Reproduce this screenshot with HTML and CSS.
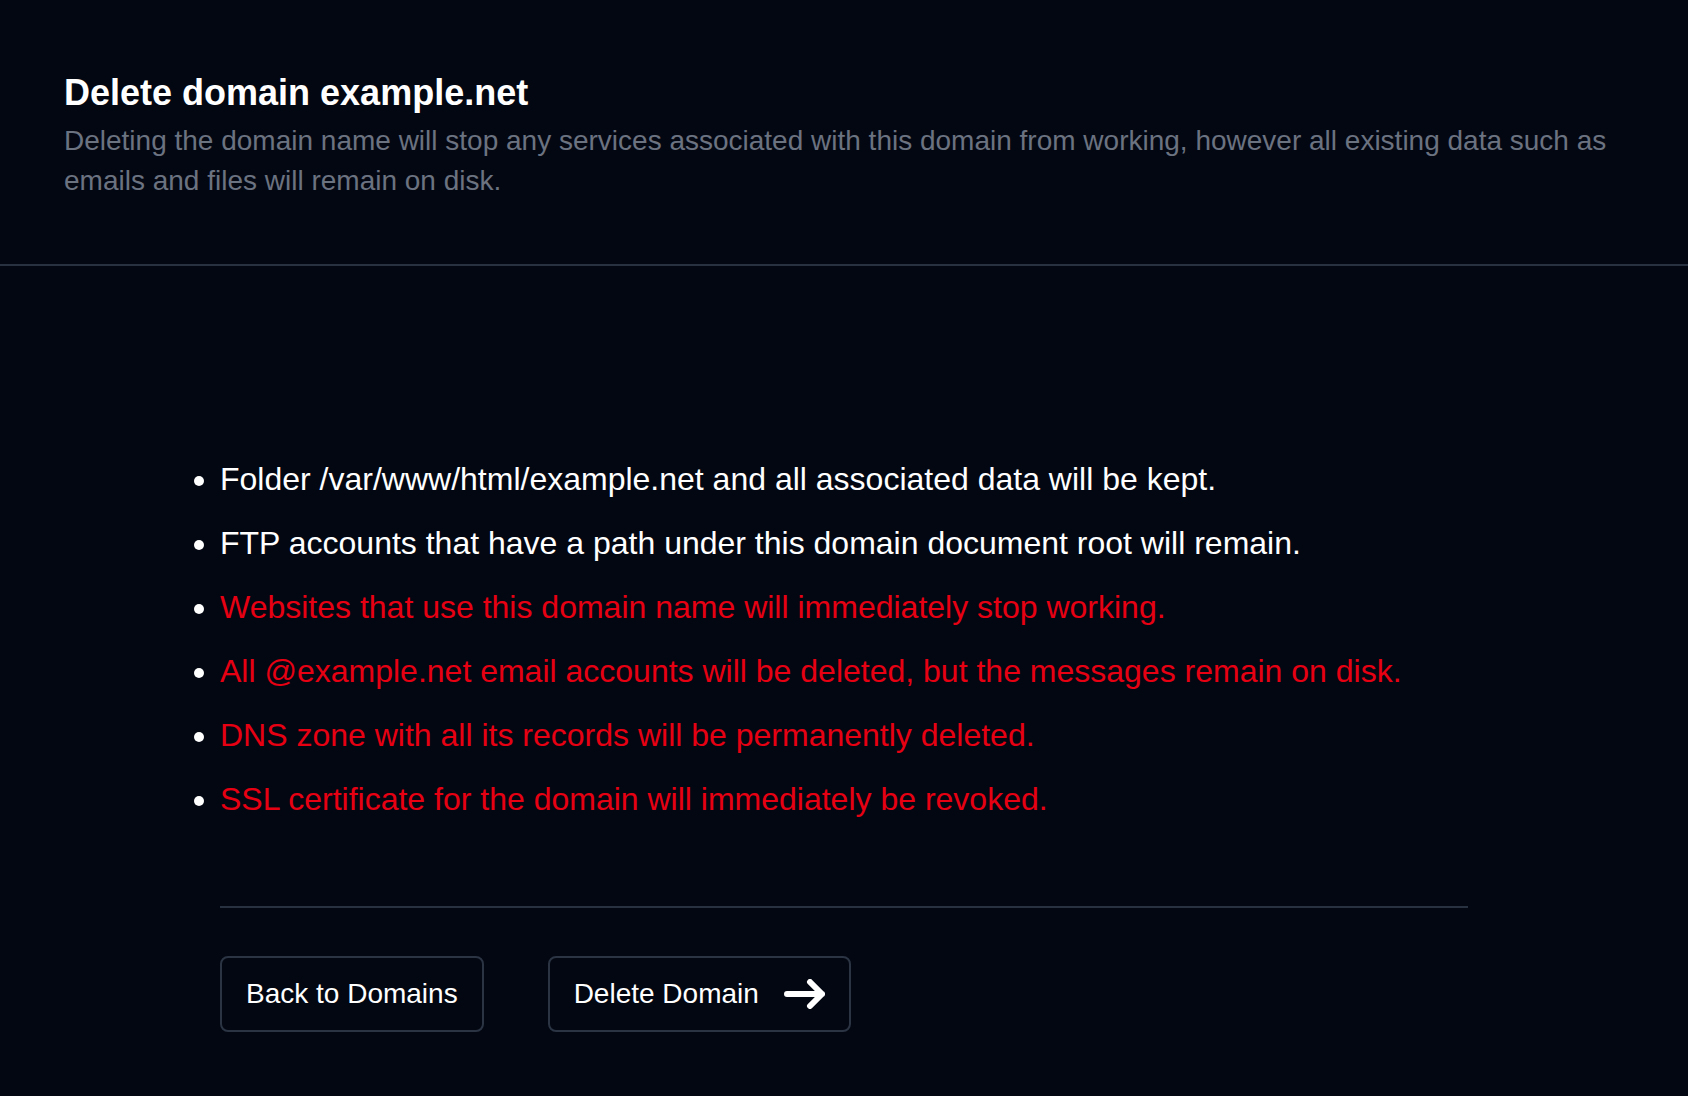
FILE: index.html
```html
<!DOCTYPE html>
<html lang="en">
<head>
<meta charset="utf-8">
<title>Delete domain example.net</title>
<link rel="stylesheet" href="styles.css">
</head>
<body>
<div class="page">
  <header class="page-header">
    <h1 class="title">Delete domain example.net</h1>
    <p class="subtitle">Deleting the domain name will stop any services associated with this domain from working, however all existing data such as emails and files will remain on disk.</p>
  </header>
  <main class="content">
    <div class="panel">
      <ul class="effects">
        <li>Folder /var/www/html/example.net and all associated data will be kept.</li>
        <li>FTP accounts that have a path under this domain document root will remain.</li>
        <li class="danger">Websites that use this domain name will immediately stop working.</li>
        <li class="danger">All @example.net email accounts will be deleted, but the messages remain on disk.</li>
        <li class="danger">DNS zone with all its records will be permanently deleted.</li>
        <li class="danger">SSL certificate for the domain will immediately be revoked.</li>
      </ul>
      <div class="actions">
        <button class="btn" type="button">Back to Domains</button>
        <button class="btn" type="button">Delete Domain
          <svg class="btn-icon" width="41" height="30" viewBox="0 0 41 30" aria-hidden="true">
            <path d="M3 15H38M26 3L38 15L26 27" fill="none" stroke="#ffffff" stroke-width="6" stroke-linecap="round" stroke-linejoin="round"/>
          </svg>
        </button>
      </div>
    </div>
  </main>
</div>
</body>
</html>
```

FILE: styles.css
```css
* {
  box-sizing: border-box;
}

html, body {
  margin: 0;
  padding: 0;
  background: #030712;
}

body {
  font-family: "Liberation Sans", Arial, sans-serif;
  color: #ffffff;
  min-height: 1096px;
}

.page-header {
  padding: 65px 64px 63px;
  border-bottom: 2px solid #283140;
}

.title {
  margin: 0;
  font-size: 36px;
  line-height: 56px;
  font-weight: 700;
  color: #ffffff;
}

.subtitle {
  margin: 0;
  font-size: 28px;
  line-height: 40px;
  color: #6b7280;
}

.content {
  padding-top: 189px;
}

.panel {
  max-width: 1344px;
  margin: 0 auto;
  padding: 0 48px;
}

.effects {
  margin: 0;
  padding: 0;
  list-style: disc outside;
  display: flex;
  flex-direction: column;
  gap: 16px;
}

.effects li {
  font-size: 32px;
  line-height: 48px;
  color: #ffffff;
}

.effects li.danger {
  color: #e60012;
}

.effects li::marker {
  color: #ffffff;
}

.actions {
  margin-top: 83px;
  border-top: 2px solid #283140;
  padding-top: 48px;
  display: flex;
  gap: 64px;
}

.btn {
  display: inline-flex;
  align-items: center;
  gap: 25px;
  height: 76px;
  padding: 16px 24px;
  border: 2px solid #2b3443;
  border-radius: 8px;
  background: transparent;
  color: #ffffff;
  font-family: "Liberation Sans", Arial, sans-serif;
  font-size: 28px;
  line-height: 40px;
  cursor: pointer;
}

.btn-icon {
  display: block;
  flex: none;
}
```
